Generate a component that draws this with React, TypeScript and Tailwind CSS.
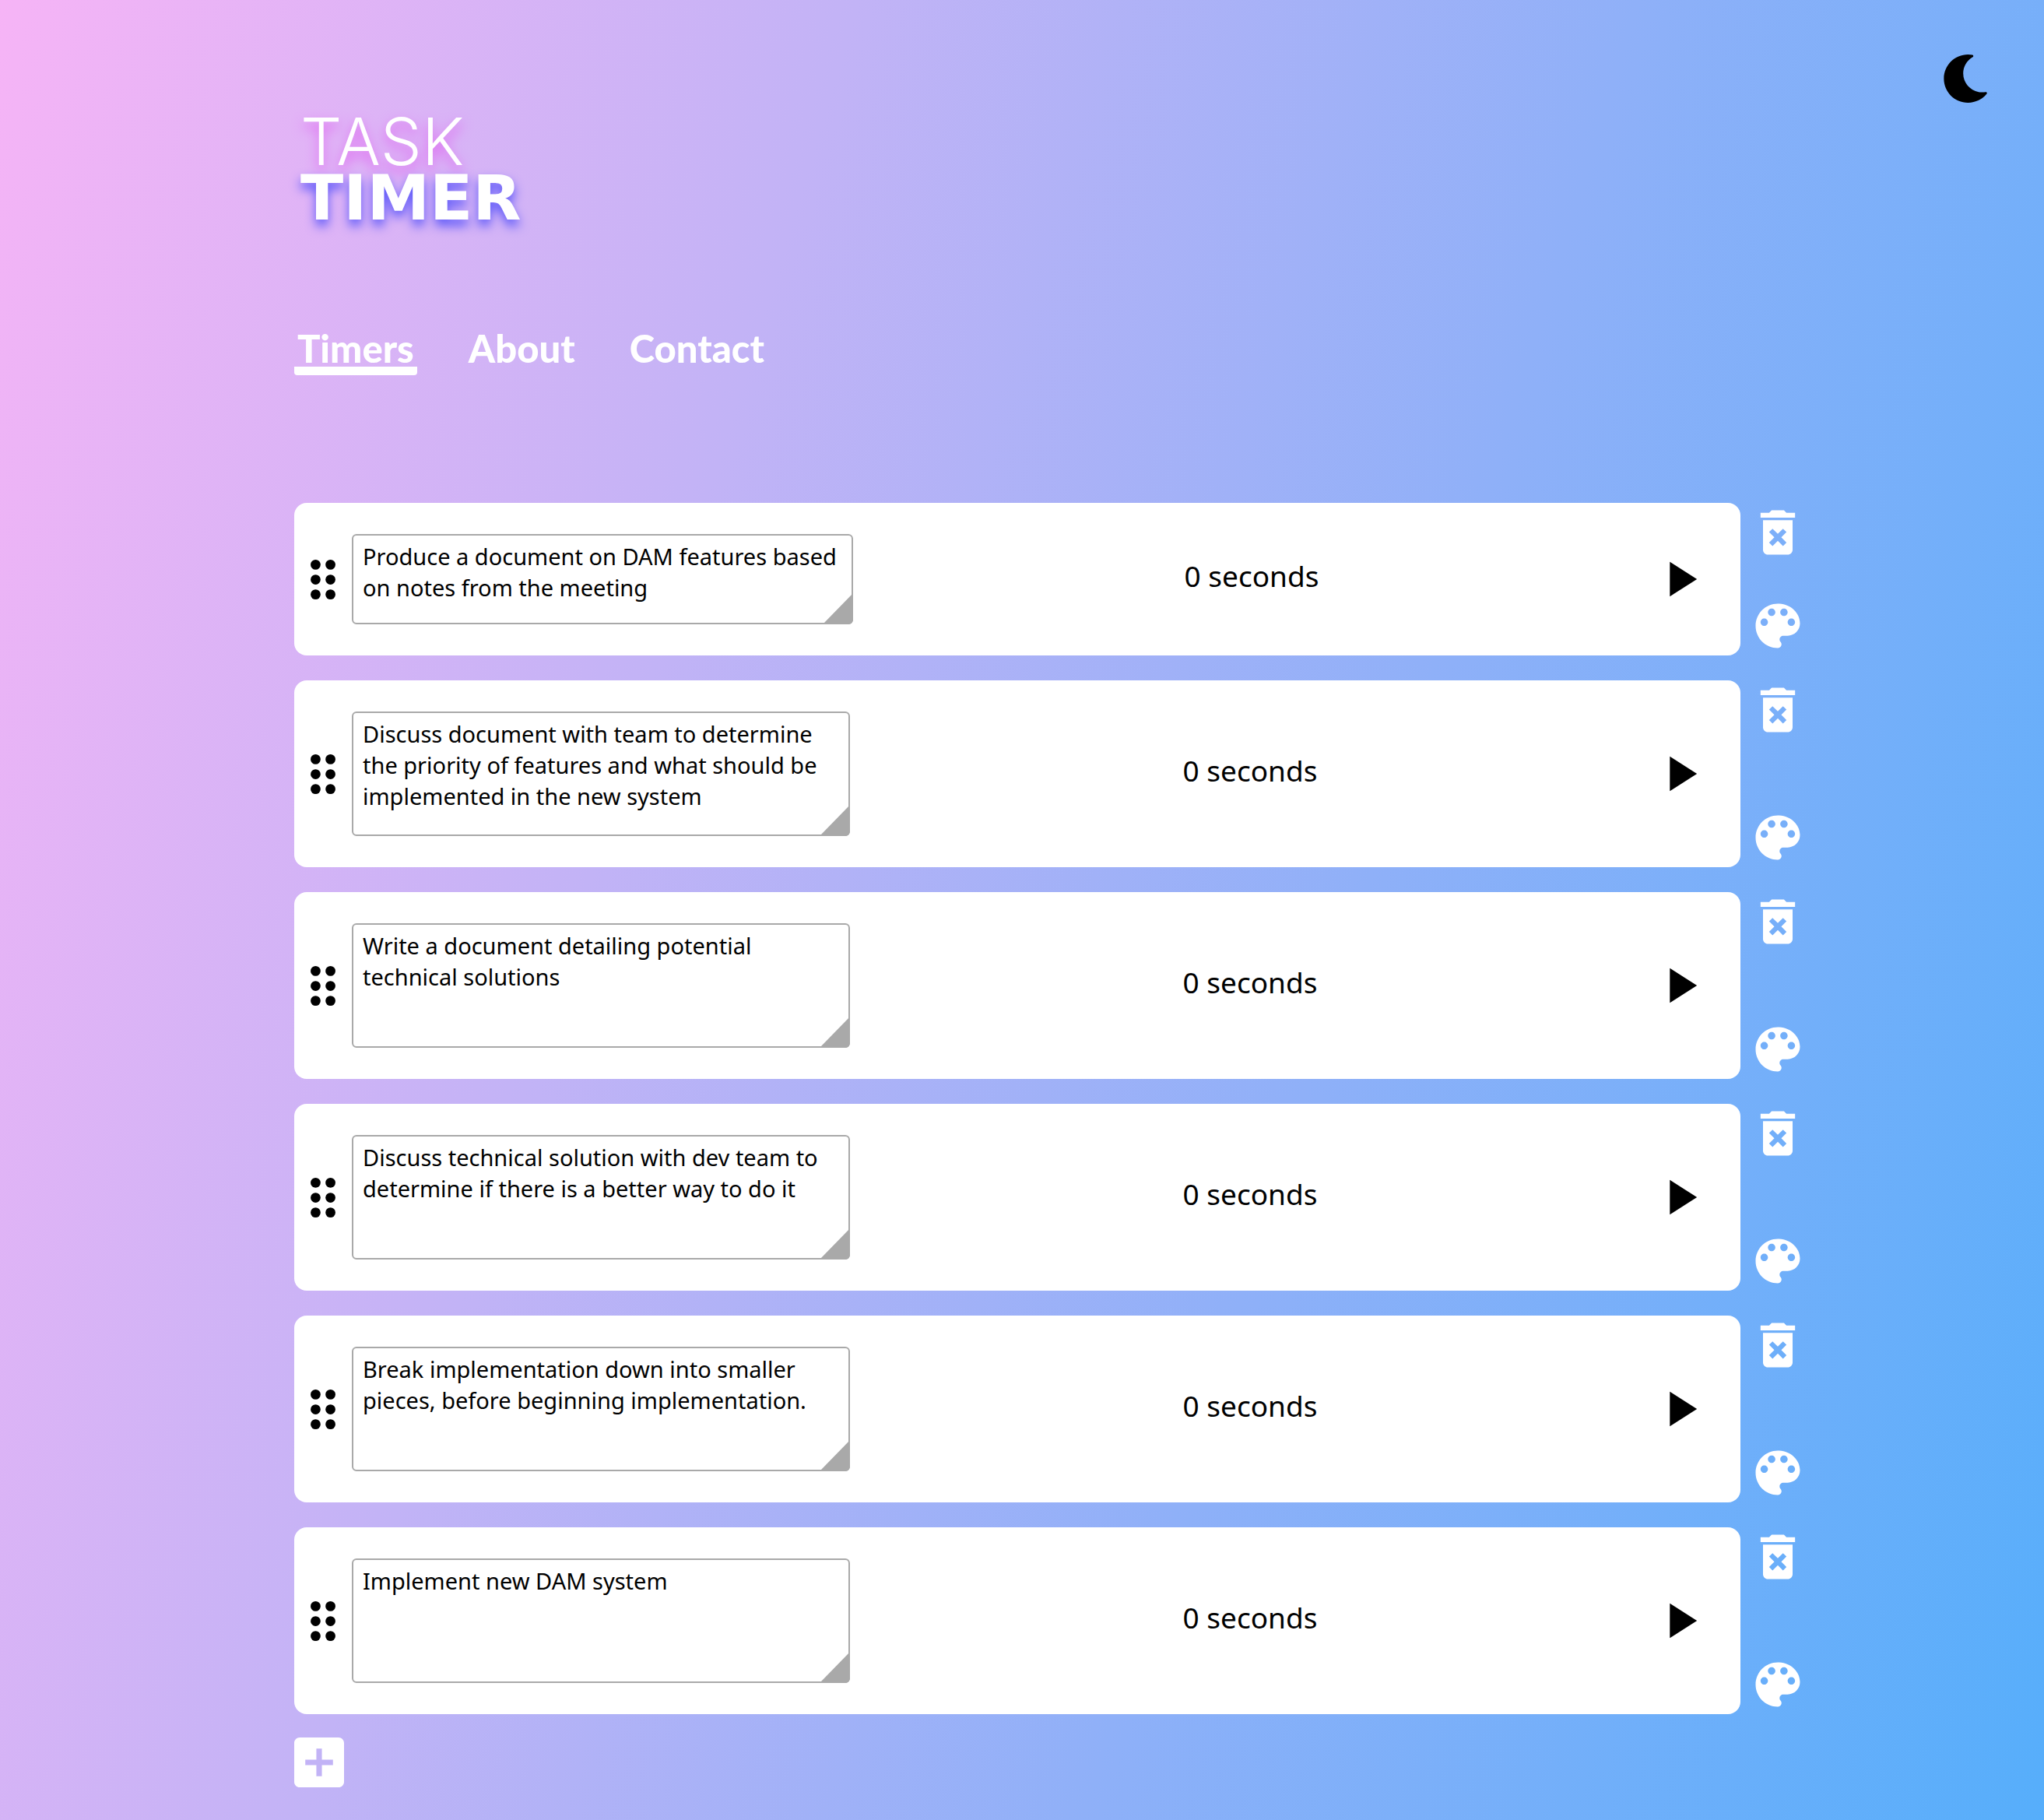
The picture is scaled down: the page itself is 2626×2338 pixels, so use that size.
import React from "react";

type Task = { id: number; text: string; time: string; compact?: boolean };

const tasks: Task[] = [
  { id: 1, text: "Produce a document on DAM features based on notes from the meeting", time: "0 seconds", compact: true },
  { id: 2, text: "Discuss document with team to determine the priority of features and what should be implemented in the new system", time: "0 seconds" },
  { id: 3, text: "Write a document detailing potential technical solutions", time: "0 seconds" },
  { id: 4, text: "Discuss technical solution with dev team to determine if there is a better way to do it", time: "0 seconds" },
  { id: 5, text: "Break implementation down into smaller pieces, before beginning implementation.", time: "0 seconds" },
  { id: 6, text: "Implement new DAM system", time: "0 seconds" },
];

const MoonIcon = () => (
  <svg viewBox="27 0 457 512" className="h-[62px] w-[56px]" fill="currentColor" aria-hidden="true">
    <path d="M283.211 512c78.962 0 151.079-35.925 198.857-94.792 7.068-8.708-.639-21.43-11.562-19.35-124.203 23.654-238.262-71.576-238.262-196.954 0-72.222 38.662-138.635 101.498-174.394 9.686-5.512 7.25-20.197-3.756-22.23A258.156 258.156 0 0 0 283.211 0c-141.309 0-256 114.511-256 256 0 141.309 114.511 256 256 256z" />
  </svg>
);

const DragIcon = () => (
  <svg viewBox="7 4 10 16" className="h-[51px] w-[32px]" fill="currentColor" aria-hidden="true">
    {[6, 12, 18].map((cy) => (
      <React.Fragment key={cy}>
        <circle cx="9" cy={cy} r="2" />
        <circle cx="15" cy={cy} r="2" />
      </React.Fragment>
    ))}
  </svg>
);

const PlayIcon = () => (
  <svg viewBox="0 0 24 24" className="size-[76px]" fill="currentColor" aria-hidden="true">
    <path d="M8 5v14l11-7z" />
  </svg>
);

const TrashIcon = () => (
  <svg viewBox="0 0 24 24" className="size-[76px]" fill="currentColor" aria-hidden="true">
    <path d="M6 19c0 1.1.9 2 2 2h8c1.1 0 2-.9 2-2V7H6v12zm2.46-7.12l1.41-1.41L12 12.59l2.12-2.12 1.41 1.41L13.41 14l2.12 2.12-1.41 1.41L12 15.41l-2.12 2.12-1.41-1.41L10.59 14l-2.13-2.12zM15.5 4l-1-1h-5l-1 1H5v2h14V4z" />
  </svg>
);

const PaletteIcon = () => (
  <svg viewBox="0 0 24 24" className="size-[76px]" fill="currentColor" aria-hidden="true">
    <path d="M12 3c-4.97 0-9 4.03-9 9s4.03 9 9 9c.83 0 1.5-.67 1.5-1.5 0-.39-.15-.74-.39-1.01-.23-.26-.38-.61-.38-.99 0-.83.67-1.5 1.5-1.5H16c2.76 0 5-2.24 5-5 0-4.42-4.03-8-9-8zm-5.5 9c-.83 0-1.5-.67-1.5-1.5S5.67 9 6.5 9 8 9.67 8 10.5 7.33 12 6.5 12zm3-4C8.67 8 8 7.33 8 6.5S8.67 5 9.5 5s1.5.67 1.5 1.5S10.33 8 9.5 8zm5 0c-.83 0-1.5-.67-1.5-1.5S13.67 5 14.5 5s1.5.67 1.5 1.5S15.33 8 14.5 8zm3 4c-.83 0-1.5-.67-1.5-1.5S16.67 9 17.5 9s1.5.67 1.5 1.5-.67 1.5-1.5 1.5z" />
  </svg>
);

const AddIcon = () => (
  <svg viewBox="3 3 18 18" className="size-16" fill="currentColor" aria-hidden="true">
    <path d="M19 3H5c-1.11 0-2 .9-2 2v14c0 1.1.89 2 2 2h14c1.1 0 2-.9 2-2V5c0-1.1-.9-2-2-2zm-2 10h-4v4h-2v-4H7v-2h4V7h2v4h4v2z" />
  </svg>
);

function TaskRow({ task }: { task: Task }) {
  return (
    <li className="flex">
      <div className="flex flex-1 items-center rounded-2xl bg-white py-10 pr-10">
        <button type="button" aria-label="Drag task" className="flex w-[74px] shrink-0 justify-center">
          <DragIcon />
        </button>
        <div className={task.compact ? "relative h-[116px] w-[644px]" : "relative h-40 w-[640px]"}>
          <textarea
            aria-label="Task description"
            defaultValue={task.text}
            className="block h-full w-full resize-none overflow-hidden rounded-[6px] border-2 border-[#a9a9a9] bg-white px-3 py-[7px] text-[29px] leading-10 text-black"
          />
          <span className="pointer-events-none absolute right-0 bottom-0 h-10 w-[39px] rounded-br-[6px] bg-[#a9a9a9] [clip-path:polygon(100%_0,100%_100%,0_100%)]" />
        </div>
        <p className="flex-1 pb-2 text-center text-[37px] leading-[48px]">{task.time}</p>
        <button type="button" aria-label="Start timer" className="shrink-0">
          <PlayIcon />
        </button>
      </div>
      <div className="ml-[10px] flex flex-col justify-between text-white">
        <button type="button" aria-label="Delete task">
          <TrashIcon />
        </button>
        <button type="button" aria-label="Change colour">
          <PaletteIcon />
        </button>
      </div>
    </li>
  );
}

export default function App() {
  return (
    <div className="min-h-screen bg-[linear-gradient(107deg,#f6b4f6,#c2b3f6_33%,#8fb0f8_63%,#56aefb)] pb-[42px] font-['Noto_Sans',sans-serif] text-black">
      <header className="pt-[70px] pr-[73px] pl-[378px]">
        <div className="flex items-start justify-between">
          <h1 className="mt-[78px] flex flex-col pl-2 text-white">
            <span className="font-['Inter',sans-serif] text-[84px] leading-[68px] font-light [text-shadow:0_8px_16px_#e060f0]">TASK</span>
            <span className="mt-1 font-['DejaVu_Sans',sans-serif] text-[81px] leading-[68px] font-bold [text-shadow:0_8px_14px_#5c58fa]">TIMER</span>
          </h1>
          <button type="button" aria-label="Toggle dark mode">
            <MoonIcon />
          </button>
        </div>
        <nav className="mt-[135px] flex gap-[62px] font-['Lato',sans-serif] text-[49px] leading-[48px] font-black text-white">
          <a href="#timers" className="rounded-b-[4px] border-b-[11px] border-white px-1">Timers</a>
          <a href="#about" className="px-1">About</a>
          <a href="#contact" className="px-1">Contact</a>
        </nav>
      </header>
      <main className="mt-[164px] pr-[304px] pl-[378px]">
        <ul className="flex flex-col gap-8">
          {tasks.map((task) => (
            <TaskRow key={task.id} task={task} />
          ))}
        </ul>
        <button type="button" aria-label="Add task" className="mt-[30px] block text-white">
          <AddIcon />
        </button>
      </main>
    </div>
  );
}
